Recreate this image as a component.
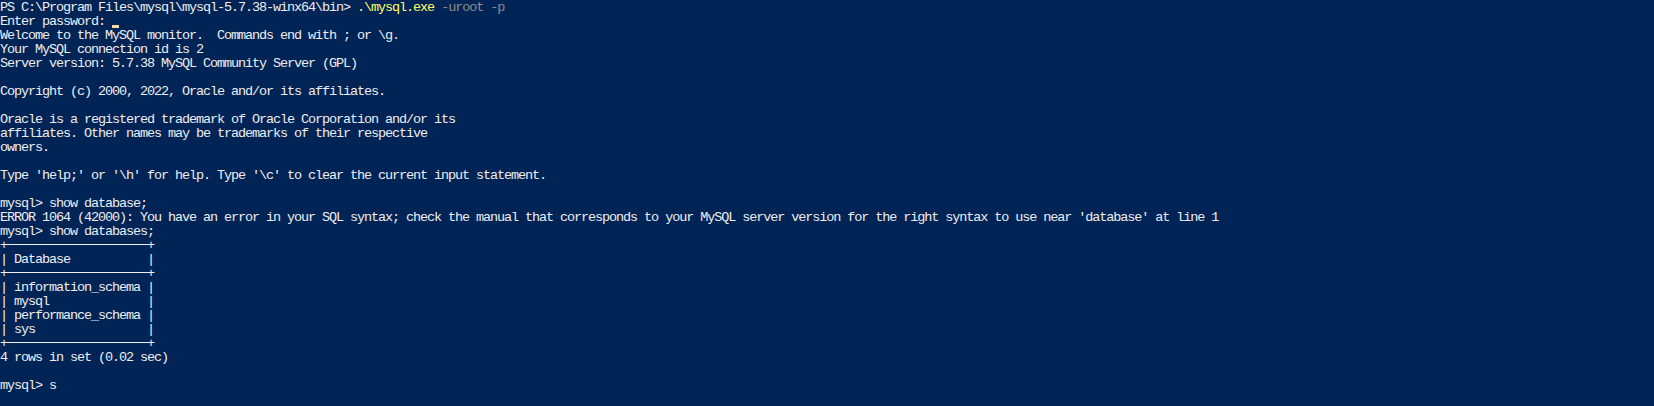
import React from 'react';

const lines = [
  'Enter password: ',
  'Welcome to the MySQL monitor.  Commands end with ; or \\g.',
  'Your MySQL connection id is 2',
  'Server version: 5.7.38 MySQL Community Server (GPL)',
  '',
  'Copyright (c) 2000, 2022, Oracle and/or its affiliates.',
  '',
  'Oracle is a registered trademark of Oracle Corporation and/or its',
  'affiliates. Other names may be trademarks of their respective',
  'owners.',
  '',
  "Type 'help;' or '\\h' for help. Type '\\c' to clear the current input statement.",
  '',
  'mysql> show database;',
  "ERROR 1064 (42000): You have an error in your SQL syntax; check the manual that corresponds to your MySQL server version for the right syntax to use near 'database' at line 1",
  'mysql> show databases;',
  '+--------------------+',
  '| Database           |',
  '+--------------------+',
  '| information_schema |',
  '| mysql              |',
  '| performance_schema |',
  '| sys                |',
  '+--------------------+',
  '4 rows in set (0.02 sec)',
  '',
  'mysql> s',
];

function Rule({ text }) {
  return (
    <span className="relative">
      <span className="text-transparent">{text}</span>
      <span className="absolute left-[-3px] right-[-3px] top-[6px] h-px bg-[#eeedf0]" />
    </span>
  );
}

export default function App() {
  return (
    <div
      className="w-[1654px] h-[406px] pt-[1px] bg-[#012456] text-[#eeedf0] overflow-hidden text-[13.5px] leading-[14px] tracking-[-1.1px]"
      style={{ fontFamily: '"Liberation Mono", "DejaVu Sans Mono", monospace' }}
    >
      <div className="h-[14px] whitespace-pre">
        PS C:\Program Files\mysql\mysql-5.7.38-winx64\bin&gt;{' '}
        <span className="text-[#ffff66]">.\mysql.exe</span>{' '}
        <span className="text-[#8c8c8c]">-uroot -p</span>
      </div>
      {lines.map((line, i) => (
        <div key={i} className="h-[14px] whitespace-pre relative">
          {line.startsWith('+-') ? (
            <>
              +<Rule text={line.slice(1, -1)} />+
            </>
          ) : (
            line
          )}
          {i === 0 && (
            <span className="absolute left-[112px] top-[10px] w-[7px] h-[3px] bg-[#fcdca0]" />
          )}
        </div>
      ))}
    </div>
  );
}
